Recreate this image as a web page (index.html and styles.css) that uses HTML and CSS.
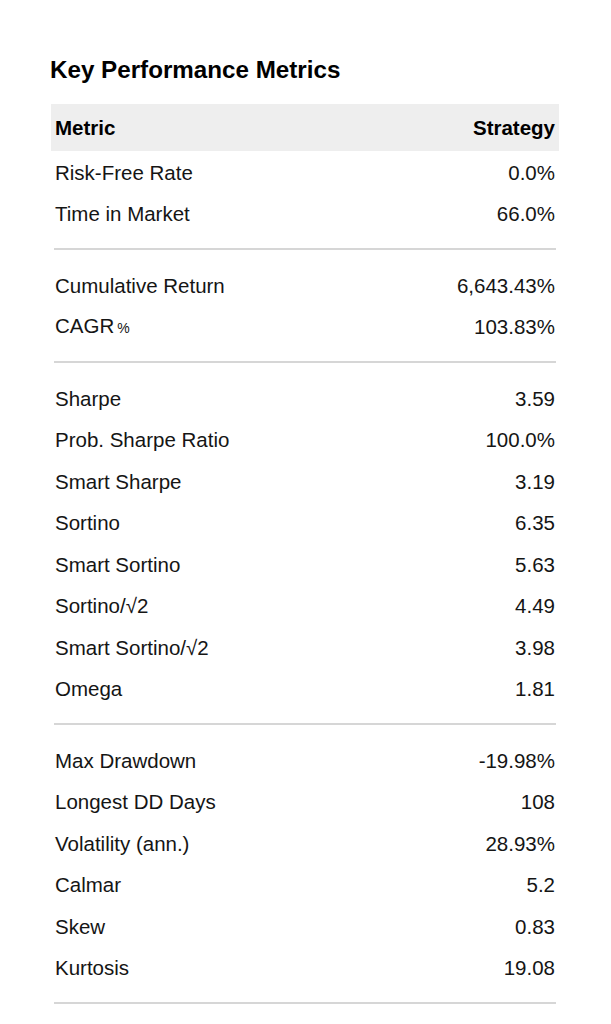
FILE: index.html
```html
<!DOCTYPE html>
<html>
<head>
<meta charset="utf-8">
<link rel="stylesheet" href="styles.css">
</head>
<body>
<div class="wrap">
  <h1 class="title">Key Performance Metrics</h1>
  <div class="table">
    <div class="row head"><span>Metric</span><span>Strategy</span></div>
    <div class="row"><span>Risk-Free Rate</span><span>0.0%</span></div>
    <div class="row"><span>Time in Market</span><span>66.0%</span></div>
    <div class="sep"></div>
    <div class="row"><span>Cumulative Return</span><span>6,643.43%</span></div>
    <div class="row"><span>CAGR<small class="pct">%</small></span><span>103.83%</span></div>
    <div class="sep"></div>
    <div class="row"><span>Sharpe</span><span>3.59</span></div>
    <div class="row"><span>Prob. Sharpe Ratio</span><span>100.0%</span></div>
    <div class="row"><span>Smart Sharpe</span><span>3.19</span></div>
    <div class="row"><span>Sortino</span><span>6.35</span></div>
    <div class="row"><span>Smart Sortino</span><span>5.63</span></div>
    <div class="row"><span>Sortino/√2</span><span>4.49</span></div>
    <div class="row"><span>Smart Sortino/√2</span><span>3.98</span></div>
    <div class="row"><span>Omega</span><span>1.81</span></div>
    <div class="sep"></div>
    <div class="row"><span>Max Drawdown</span><span>-19.98%</span></div>
    <div class="row"><span>Longest DD Days</span><span>108</span></div>
    <div class="row"><span>Volatility (ann.)</span><span>28.93%</span></div>
    <div class="row"><span>Calmar</span><span>5.2</span></div>
    <div class="row"><span>Skew</span><span>0.83</span></div>
    <div class="row"><span>Kurtosis</span><span>19.08</span></div>
    <div class="sep"></div>
  </div>
</div>
</body>
</html>
```
FILE: styles.css
```css
html, body {
  margin: 0;
  padding: 0;
  background: #fff;
}
body {
  font-family: "Liberation Sans", Arial, sans-serif;
  color: #151515;
}
.wrap {
  width: 508px;
  padding: 56px 0 0 51px;
}
.title {
  margin: 0 0 20px -1px;
  font-size: 24.2px;
  line-height: 28px;
  font-weight: bold;
  color: #000;
}
.table {
  display: flex;
  flex-direction: column;
}
.row {
  display: flex;
  justify-content: space-between;
  align-items: center;
  height: 41.5px;
  padding: 2px 4px 0;
  box-sizing: border-box;
  font-size: 20.5px;
  line-height: 24px;
}
.row.head {
  height: 47px;
  padding-top: 1px;
  background: #eeeeee;
  font-weight: bold;
  color: #000;
}
.pct {
  font-size: 14px;
  margin-left: 3px;
}
.sep {
  height: 30px;
  display: flex;
  align-items: center;
  padding: 0 3px;
}
.sep::before {
  content: "";
  flex: 1;
  height: 2px;
  background: #d6d6d6;
}
```
